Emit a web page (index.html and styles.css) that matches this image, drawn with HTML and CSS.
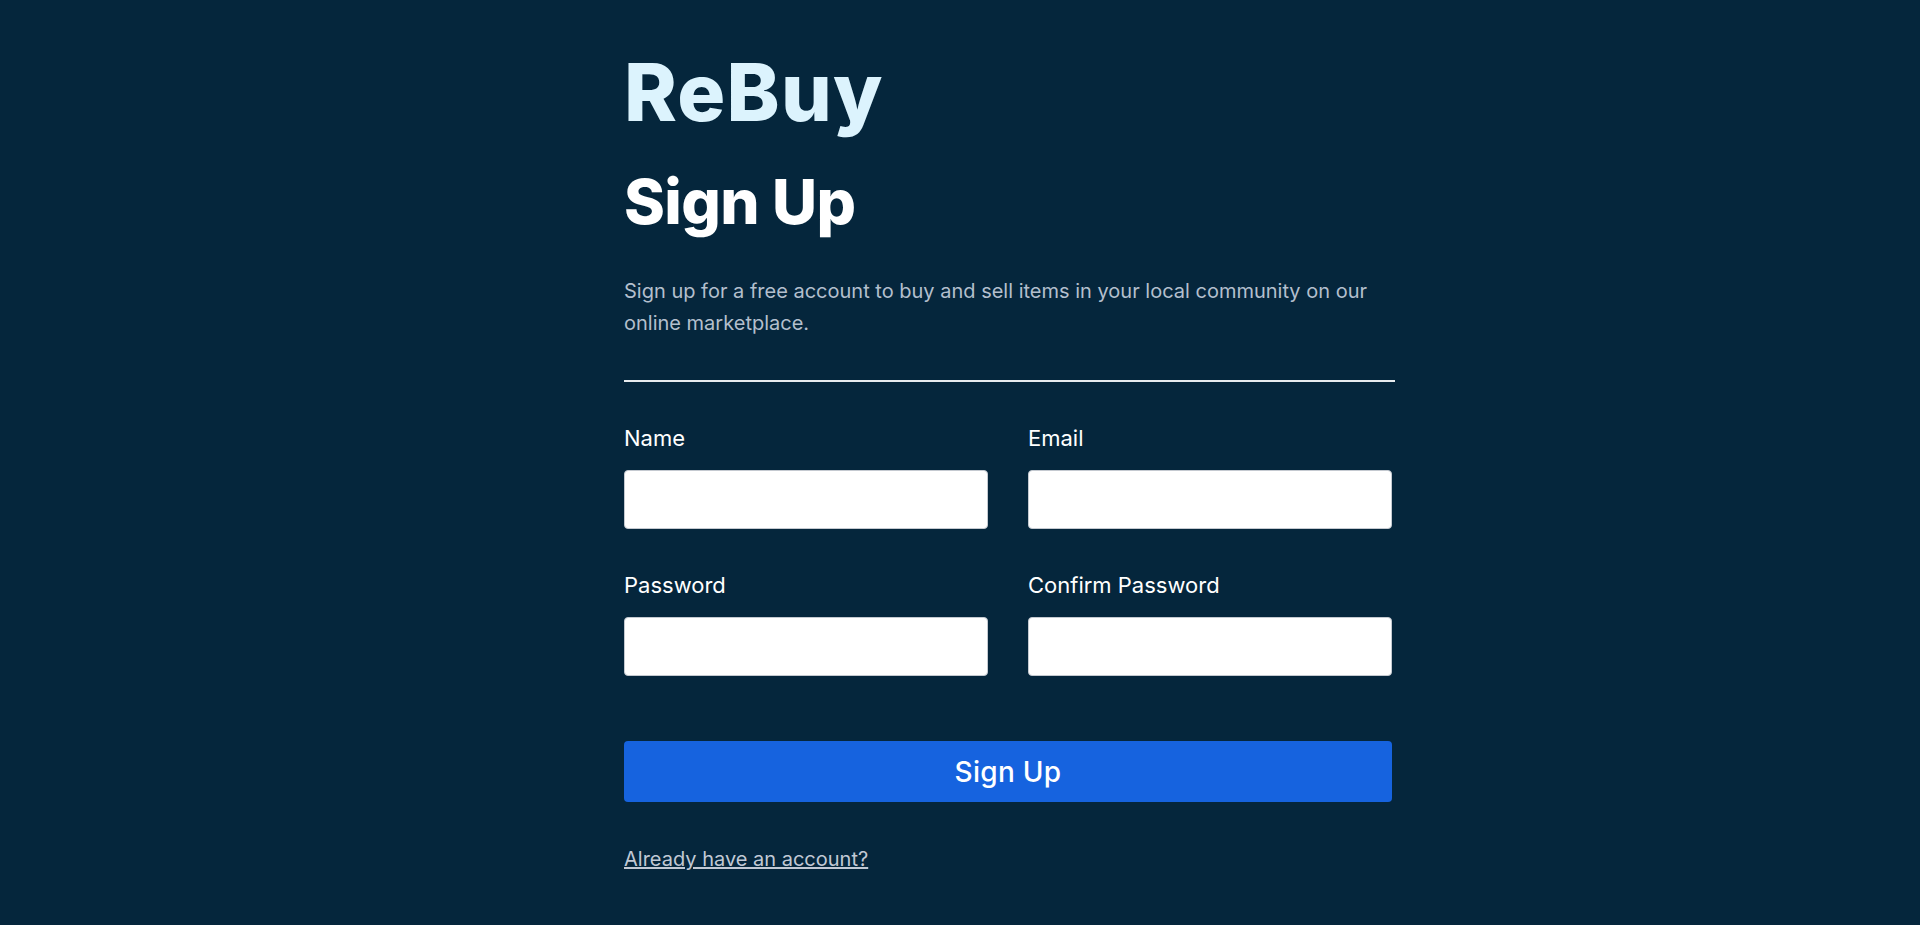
FILE: index.html
```html
<!DOCTYPE html>
<html lang="en">
<head>
<meta charset="utf-8">
<title>ReBuy - Sign Up</title>
<link rel="stylesheet" href="styles.css">
</head>
<body>
<main class="page">
  <section class="panel">
    <h1 class="brand">ReBuy</h1>
    <h2 class="title">Sign Up</h2>
    <p class="intro">Sign up for a free account to buy and sell items in your local community on our online marketplace.</p>
    <hr class="rule">
    <form class="form">
      <div class="grid">
        <label class="field">
          <span class="label">Name</span>
          <input class="input" type="text">
        </label>
        <label class="field">
          <span class="label">Email</span>
          <input class="input" type="email">
        </label>
        <label class="field">
          <span class="label">Password</span>
          <input class="input" type="password">
        </label>
        <label class="field">
          <span class="label">Confirm Password</span>
          <input class="input" type="password">
        </label>
      </div>
      <button class="submit" type="button">Sign Up</button>
    </form>
    <a class="login" href="#">Already have an account?</a>
  </section>
</main>
</body>
</html>
```

FILE: styles.css
```css
* { box-sizing: border-box; }
html, body {
  margin: 0;
  height: 100%;
  background: #05263c;
}
body {
  font-family: Inter, "Liberation Sans", sans-serif;
  color: #ffffff;
  overflow: hidden;
}
.page {
  padding-left: 624px;
  padding-top: 44px;
}
.panel {
  width: 771px;
  display: flex;
  flex-direction: column;
}
.brand {
  margin: 0;
  font-size: 80px;
  line-height: 96px;
  font-weight: 800;
  color: #dcf3fd;
  letter-spacing: 1.2px;
}
.title {
  margin: 24px 0 0;
  font-size: 62px;
  line-height: 76px;
  font-weight: 800;
  color: #ffffff;
  letter-spacing: -0.6px;
}
.intro {
  margin: 35px 0 0;
  font-size: 20px;
  line-height: 32px;
  color: #b3bfcd;
}
.rule {
  margin: 41px 0 0;
  border: 0;
  height: 2px;
  background: #e8ecef;
  width: 771px;
}
.form {
  width: 768px;
  margin-top: 44px;
}
.grid {
  display: grid;
  grid-template-columns: 1fr 1fr;
  column-gap: 40px;
  row-gap: 44px;
}
.field {
  display: flex;
  flex-direction: column;
  gap: 20px;
}
.label {
  font-size: 22px;
  line-height: 24px;
  color: #ffffff;
}
.input {
  height: 59px;
  border: 1px solid #c4c9d0;
  border-radius: 4px;
  background: #ffffff;
  font: inherit;
  padding: 0 12px;
}
.submit {
  margin-top: 65px;
  width: 100%;
  height: 61px;
  border: 0;
  border-radius: 4px;
  background: #1663df;
  color: #ffffff;
  font-family: Inter, "Liberation Sans", sans-serif;
  font-size: 28px;
  font-weight: 500;
  letter-spacing: 0.3px;
}
.login {
  margin-top: 45px;
  align-self: flex-start;
  font-size: 20px;
  line-height: 24px;
  color: #c1c9d5;
}
```
